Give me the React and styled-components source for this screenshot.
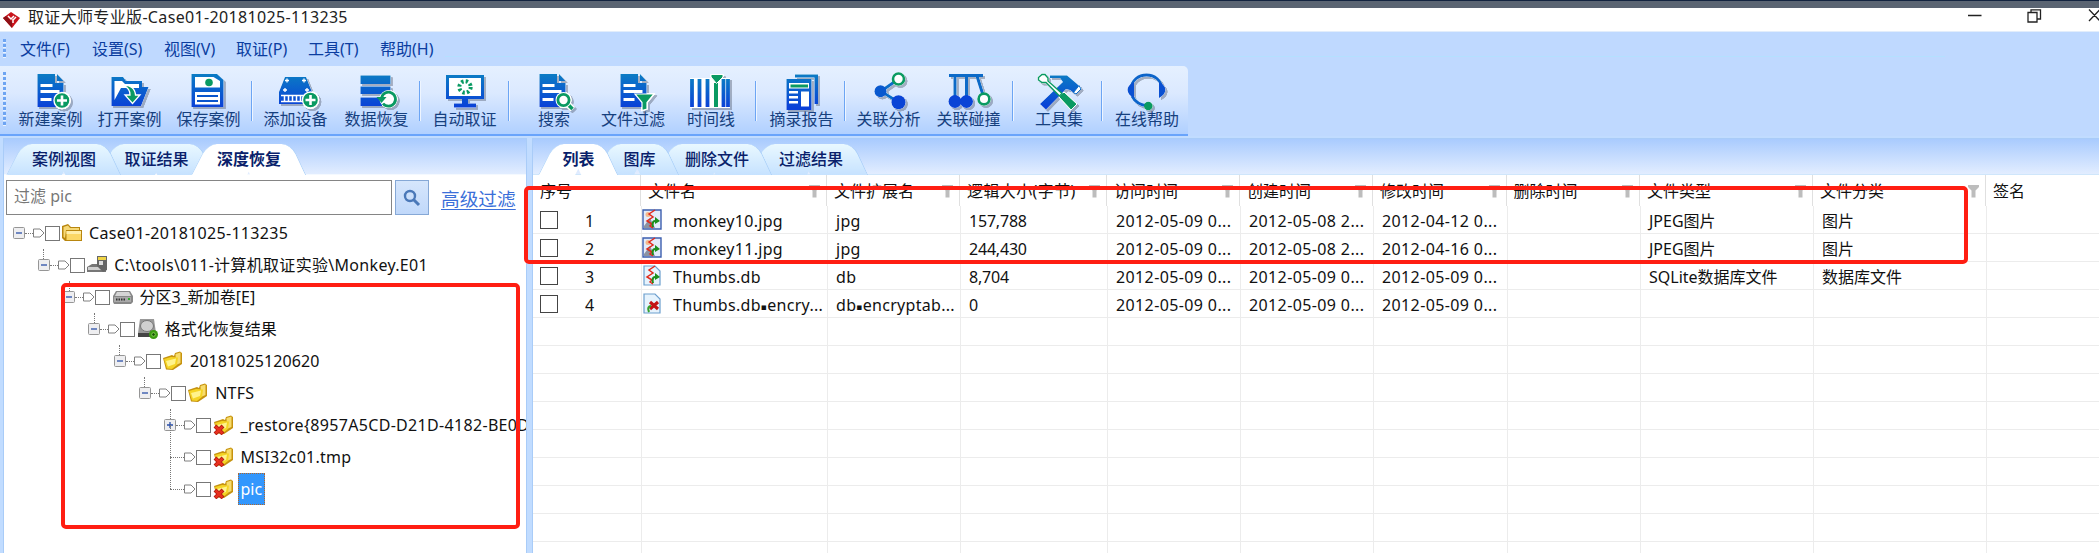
import React from 'react';
import styled, { createGlobalStyle, css } from 'styled-components';

const Global = createGlobalStyle`
  * { box-sizing: border-box; }
  html, body { margin: 0; padding: 0; overflow: hidden; }
  body {
    font-family: "Noto Sans", "Noto Sans CJK SC", sans-serif;
    font-size: 16px;
    line-height: 20px;
    color: #111;
    background: #bfd9ff;
    white-space: nowrap;
  }
`;

const Window = styled.div`
  position: relative;
  display: flex;
  flex-direction: column;
  width: 2099px;
  height: 553px;
  overflow: hidden;
`;

const DesktopStrip = styled.div`
  flex: none;
  height: 8px;
  background: #5a6472;
  border-top: 1px solid #12233f;
`;

const TitleBar = styled.header`
  flex: none;
  display: flex;
  align-items: center;
  height: 24px;
  padding-left: 2px;
  background: #fff;
  border-bottom: 1px solid #e2edfb;
`;

const Title = styled.span`
  flex: 1;
  margin: -5px 0 0 7px;
  color: #222;
  letter-spacing: 0.34px;
`;

const WindowControls = styled.div`
  display: flex;
  align-items: flex-start;
  width: 133px;
  height: 22px;
`;

const MenuBar = styled.nav`
  flex: none;
  display: flex;
  align-items: center;
  height: 34px;
  padding-left: 3px;
  background: linear-gradient(#b4e0ff, #b4e0ff) 445px 24px / 1500px 1px no-repeat, #bfd9ff;
`;

const DragHandle = styled.i`
  flex: none;
  width: 3px;
  height: ${(p) => p.$height}px;
  background: repeating-linear-gradient(#6da4f2 0 3px, #eaf3ff 3px 4px, transparent 4px 5px);
`;

const MenuItem = styled.span`
  width: 72px;
  margin-top: -1px;
  color: #0b3da0;
  &:first-of-type { margin-left: 14px; }
`;

const Toolbar = styled.div`
  flex: none;
  display: flex;
  width: 1188px;
  height: 70px;
  padding: 6px 0 0 3px;
  border-bottom: 2px solid #69a4fb;
  border-top-right-radius: 5px;
  background: linear-gradient(#e5f0ff, #dbe9ff 40%, #b0d0ff);
`;

const ToolSeparator = styled.i`
  flex: none;
  width: 2px;
  height: 40px;
  margin: 9px -0.5px 0 ${(p) => p.$gap - 0.5}px;
  border-left: 1px solid #6ca5f4;
  border-right: 1px solid #eef5ff;
`;

const ToolButton = styled.div`
  flex: none;
  display: flex;
  flex-direction: column;
  align-items: center;
  width: ${(p) => p.$width}px;
  margin-left: ${(p) => p.$gap}px;
  color: #16407e;
`;

const ToolLabel = styled.span`
  margin-top: -3px;
`;

const ToolSvg = styled.svg`
  flex: none;
  width: 44px;
  height: 40px;
  overflow: visible;
  filter: drop-shadow(0 0 0.7px #fff) drop-shadow(0 0 0.5px #fff) drop-shadow(2px 2px 0.5px rgba(90, 100, 120, 0.45));
`;

const Workspace = styled.main`
  flex: 1;
  display: flex;
  min-height: 0;
  padding-top: 3px;
  background: #c1dcff;
`;

const Pane = styled.section`
  flex: none;
  display: flex;
  flex-direction: column;
  width: ${(p) => p.$width}px;
  margin-left: ${(p) => p.$offset}px;
  overflow: hidden;
  background: #fff;
  box-shadow: 0 0 0 1px #a9ccf8;
`;

const TabStrip = styled.div`
  flex: none;
  display: flex;
  align-items: flex-end;
  height: 36px;
  padding-left: ${(p) => p.$start}px;
  background: linear-gradient(#a9cbfe, #e2edff);
  border-bottom: 1px solid ${(p) => (p.$line ? '#cfe6fb' : '#f4f9ff')};
`;

const tabFace = css`
  content: '';
  position: absolute;
  z-index: -1;
  top: 0;
  bottom: -1px;
  width: 55%;
  background: ${(p) => (p.$active ? '#fff' : 'linear-gradient(#e9f8ff, #c6e2ff)')};
`;

const Tab = styled.div`
  position: relative;
  isolation: isolate;
  z-index: ${(p) => p.$level};
  width: ${(p) => p.$width}px;
  height: 30px;
  margin-right: -8px;
  padding-left: ${(p) => p.$nudge || 0}px;
  line-height: 31px;
  text-align: center;
  color: #0a1f6b;
  font-weight: ${(p) => (p.$active ? 600 : 500)};
  &::before {
    ${tabFace}
    left: 0;
    border-left: 1px solid #b7d8fa;
    border-top-left-radius: 10px;
    transform: skewX(-27deg);
  }
  &::after {
    ${tabFace}
    right: 0;
    border-right: 1px solid #a9cff8;
    border-top-right-radius: 10px;
    transform: skewX(25deg);
  }
`;

const FilterBar = styled.div`
  display: flex;
  align-items: flex-start;
  height: 37px;
  margin-top: 5px;
  padding-left: 2px;
`;

const FilterInput = styled.div`
  width: 386px;
  height: 35px;
  padding-left: 7px;
  border: 1px solid #858585;
  line-height: 31px;
  color: #777;
`;

const FilterButton = styled.div`
  display: flex;
  align-items: center;
  justify-content: center;
  width: 34px;
  height: 35px;
  margin-left: 3px;
  border: 1px solid #86a8d6;
  background: linear-gradient(#d6e6fc, #c0d8fa);
`;

const AdvancedLink = styled.a`
  margin-left: 12px;
  font-size: 18.7px;
  line-height: 38px;
  color: #3b6fd9;
  text-decoration: underline;
  text-underline-offset: 3px;
  text-decoration-thickness: 1px;
`;

const TreeRow = styled.div`
  position: relative;
  display: flex;
  align-items: center;
  height: 32px;
  padding-left: ${(p) => 8.5 + p.$level * 25.25}px;
  & > * { flex: none; }
`;

const Riser = styled.i`
  position: absolute;
  left: ${(p) => 14 + p.$level * 25.25}px;
  top: ${(p) => (p.$joined ? -16 : 0)}px;
  height: ${(p) => (p.$joined ? 32 : 10)}px;
  border-left: 1px dotted #777;
`;

const Expander = styled.svg`
  position: relative;
  width: 12px;
  height: 12px;
`;

const Branch = styled.i`
  width: ${(p) => (p.$leaf ? 14 : 8)}px;
  margin-left: ${(p) => (p.$leaf ? 6 : 0)}px;
  border-top: 1px dotted #777;
`;

const TreeCheck = styled.i`
  width: 15px;
  height: 15px;
  margin-right: -0.5px;
  border: 1px solid #777;
  background: #fff;
`;

const NodeIcon = styled.svg`
  width: 22px;
  height: 20px;
  margin-left: 2px;
`;

const NodeLabel = styled.span`
  margin-left: 3px;
  padding: 0 2px;
  height: 32px;
  line-height: 30px;
  border: 1px solid transparent;
  letter-spacing: ${(p) => p.$tracking || 0}px;
  ${(p) => p.$selected && css`
    color: #fff;
    background: #3397fd;
    border: 1px dotted #b0672c;
  `}
`;

const columns = '108px 186px 133px 147px 133px 133px 133.5px 133.5px 173px 173px 1fr';

const HeaderRow = styled.div`
  flex: none;
  display: grid;
  grid-template-columns: ${columns};
  height: 31px;
`;

const HeaderCell = styled.div`
  display: flex;
  align-items: center;
  justify-content: space-between;
  padding: 1px 6px 0 7px;
  border-right: 1px solid #e0e0e0;
  letter-spacing: ${(p) => p.$tracking || 0}px;
  &:last-child { border-right: 0; }
`;

const DataRow = styled.div`
  flex: none;
  display: grid;
  grid-template-columns: ${columns};
  height: 28px;
  padding-left: 1px;
  border-bottom: 1px solid #ececec;
`;

const Cell = styled.div`
  display: flex;
  align-items: center;
  overflow: hidden;
  padding: 2px 0 0 8px;
  border-right: 1px solid #ececec;
  letter-spacing: ${(p) => p.$tracking || 0}px;
  &:last-child { border-right: 0; }
`;

const IndexCell = styled(Cell)`
  padding-left: 6px;
`;

const FileCell = styled(Cell)`
  padding-left: 0;
`;

const RowCheck = styled.i`
  width: 18px;
  height: 18px;
  margin-top: -2px;
  border: 1px solid #444;
`;

const RowNumber = styled.span`
  width: 63px;
  text-align: center;
`;

const FileSvg = styled.svg`
  flex: none;
  width: 20px;
  height: 21px;
  margin: -2px 11px 0 0;
`;

const SquareDot = styled.span`
  font-family: "DejaVu Sans", sans-serif;
  font-size: 9px;
  line-height: 16px;
  vertical-align: 1.5px;
`;

const Highlight = styled.div`
  position: absolute;
  z-index: 20;
  left: ${(p) => p.$x}px;
  top: ${(p) => p.$y}px;
  width: ${(p) => p.$w}px;
  height: ${(p) => p.$h}px;
  border: 4px solid #ff1e12;
  border-radius: 5px;
`;

const G = '#0a9a62';
const B = 'url(#toolBlue)';

const DocShape = ({ x }) => (
  <g transform={`translate(${x} 0)`}>
    <path d="M0 2H17.5V11H26V35H0Z" fill={B} />
    <path d="M19.5 2L26 9H19.5Z" fill={B} />
    <path d="M3 13.5H15M3 19.5H22M3 27.5H14" stroke="#fff" strokeWidth="2.8" />
  </g>
);

const PlusBadge = ({ x, y }) => (
  <g>
    <circle cx={x} cy={y} r="8" fill={G} stroke="#fff" strokeWidth="1.4" />
    <path d={`M${x - 5} ${y}H${x + 5}M${x} ${y - 5}V${y + 5}`} stroke="#fff" strokeWidth="2.6" />
  </g>
);

const toolArt = {
  create: <><DocShape x={8.5} /><PlusBadge x={33} y={28.5} /></>,
  open: (
    <>
      <path d="M3.5 5H15L18 9H34V15H40.5L33 34H3.5Z" fill={B} />
      <path d="M6.5 9H14L17 12H31V16H13L6.5 28Z" fill="#fff" />
      <path d="M16 13.5C22 13 27 16 27.5 23H32L24.5 31.5L17 23H22C22 18 20 16 16 13.5Z" fill={G} stroke="#fff" strokeWidth="1.3" />
    </>
  ),
  save: (
    <>
      <path d="M4.5 2H30L36.5 8V35H4.5Z" fill={B} />
      <path d="M8 5H26.5L33 9V15.5H8ZM8 20H33V32.5H8Z" fill="#fff" />
      <circle cx="22" cy="10.5" r="3.8" fill={G} />
      <path d="M10 24H31M10 29H31" stroke="#0a55cc" strokeWidth="2.2" />
    </>
  ),
  device: (
    <>
      <path d="M11 5H32L38 20V32H5V20Z" fill={B} />
      <path d="M7 23.5H34M7 29.5H34M10.5 23V30M14.5 23V30M18.5 23V30M22.5 23V30M26.5 23V30" stroke="#fff" strokeWidth="1.5" />
      <path d="M11 8.5H15M13 6.5V10.5M28 8.5H32M30 6.5V10.5M9 18H13M11 16V20M31 18H35M33 16V20" stroke="#fff" strokeWidth="1.3" />
      <PlusBadge x={36.5} y={28} />
    </>
  ),
  restore: (
    <>
      <path d="M5.5 3.5H35.5V12H5.5ZM5.5 14.5H35.5V22H5.5ZM5.5 25.5H27V34H5.5Z" fill={B} />
      <circle cx="33.5" cy="27" r="9" fill="#fff" />
      <path d="M28 31.5A7 7 0 1 0 26.7 25.5" fill="none" stroke={G} strokeWidth="2.8" />
      <path d="M21.5 25H31.5L26.5 31Z" fill={G} />
    </>
  ),
  auto: (
    <>
      <path d="M3 3H41V27H3Z" fill={B} />
      <path d="M6 6H38V24H6Z" fill="#fff" />
      <circle cx="22" cy="15" r="5.7" fill="none" stroke={G} strokeWidth="4" strokeDasharray="2.3 2.18" />
      <path d="M19 27H25V31.5H33V35.5H11V31.5H19Z" fill={B} />
    </>
  ),
  search: (
    <>
      <DocShape x={7.5} />
      <path d="M35.5 32L40.5 37" stroke="#fff" strokeWidth="6" />
      <path d="M35.5 32L40.5 37" stroke={G} strokeWidth="3.5" />
      <circle cx="31.5" cy="28" r="8" fill="#fff" />
      <circle cx="31.5" cy="28" r="5.6" fill="#fff" stroke={G} strokeWidth="2.8" />
    </>
  ),
  filter: (
    <>
      <DocShape x={9.5} />
      <path d="M24 22H43L36 30.5V37L31 38.5V30.5Z" fill={G} stroke="#fff" strokeWidth="1.2" />
    </>
  ),
  timeline: (
    <>
      <path d="M1 6H41V36H1Z" fill="#fff" />
      <path d="M3 7V35M10.5 7V35M18.5 7V35M34.5 7V35M39 7V35" stroke="url(#barBlue)" strokeWidth="3.8" />
      <path d="M27 11V35" stroke={G} strokeWidth="4" />
      <path d="M22 2.5H34V5L27.5 11.5L22 5Z" fill={G} stroke="#fff" />
    </>
  ),
  report: (
    <>
      <path d="M15 2.5H38V32H34.5V5.5H15Z" fill={B} />
      <path d="M6.5 7H31.5V38H6.5Z" fill={B} />
      <path d="M9 11H29V16.5H9ZM9 19H18V21.5H9ZM9 24H18V26.5H9ZM9 29H18V31.5H9ZM21 19.5H29V34.5H21Z" fill="#fff" />
      <path d="M10.5 12.5H28V15.5H10.5Z" fill={G} />
    </>
  ),
  relation: (
    <>
      <path d="M31.5 7L14 19.3L31.5 30.3" fill="none" stroke="#0b6cc8" strokeWidth="2.8" />
      <circle cx="13.5" cy="19.3" r="6" fill="#0858cf" />
      <circle cx="31.5" cy="30.3" r="7" fill="#0a44d6" />
      <circle cx="31.5" cy="7" r="5.5" fill="#fff" stroke={G} strokeWidth="2.6" />
    </>
  ),
  collide: (
    <>
      <path d="M2 3.5H36M8 4V28M19.5 4V28M30 4L36 23" fill="none" stroke="#0c6ac8" strokeWidth="3" />
      <circle cx="8" cy="29.5" r="6.5" fill="#0a44d6" />
      <circle cx="19.5" cy="29.5" r="6.5" fill="#0a44d6" />
      <circle cx="37" cy="27" r="5.4" fill="#fff" stroke={G} strokeWidth="2.7" />
    </>
  ),
  tools: (
    <>
      <path d="M3 32L26 10L23 6L13 6V3.5H30L40 12L43 15L38 22L33 18L29 17L9 37.5Z" fill={B} />
      <path d="M36.5 20.5L42 13.5L44 17L39 22Z" fill="#fff" stroke="#0b6cc8" strokeWidth="1" />
      <path d="M22 25L27 20L40 32L34 38Z" fill={G} stroke="#fff" strokeWidth="1" />
      <path d="M1.5 5.5L5 2.5H8L11 6V9L25 21.5L22.5 24L9 10.5H5L1.5 8Z" fill="#fff" stroke={G} strokeWidth="1.4" />
    </>
  ),
  help: (
    <>
      <path d="M6 18C6 -2 37 -2 37 18M7 24C10 30 15 33.5 23 33.5" fill="none" stroke="#0c64ca" strokeWidth="2.8" />
      <path d="M9 10C0 14 1 22 9 26ZM34 10C43 14 42 22 34 26Z" fill="#0a50d2" />
      <circle cx="23.3" cy="34" r="4.3" fill={G} />
    </>
  ),
};

const tools = [
  ['create', '新建案例', 12.5], ['open', '打开案例', 15], ['save', '保存案例', 15], 11,
  ['device', '添加设备', 11], ['restore', '数据恢复', 17], 11,
  ['auto', '自动取证', 12], 12,
  ['search', '搜索', 28.5], ['filter', '文件过滤', 31], ['timeline', '时间线', 22], 20,
  ['report', '摘录报告', 13.5], 11,
  ['relation', '关联分析', 11], ['collide', '关联碰撞', 16], 11.5,
  ['tools', '工具集', 22], 18,
  ['help', '在线帮助', 13],
];

const menus = ['文件(F)', '设置(S)', '视图(V)', '取证(P)', '工具(T)', '帮助(H)'];

const Folder = () => (
  <>
    <path d="M1 7L10 4L12 5L13 2L18 0.5L20 2V13L11 19L4 18.5Z" fill="#c6930f" />
    <path d="M13.5 3L18.5 1.5V12L14 14Z" fill="#f7dc6c" />
    <path d="M2 8L9 6L16 6.5L15 14L10 18L5 17.5Z" fill="#f5d425" />
    <path d="M4 10L14 7.5L13 13L6 15.5Z" fill="#fff38c" />
  </>
);

const nodeArt = {
  root: (
    <>
      <path d="M1 3L7 1L10 4H19V7H21V18H4L1 15Z" fill="#b8860f" />
      <path d="M2.5 4L7 2.5L9 5H18V7H5L4 15L2.5 14Z" fill="#f6d876" />
      <path d="M5.5 8H20V17H5.5Z" fill="#fbd766" />
      <path d="M5.5 8H20V11H5.5Z" fill="#ffeeaa" />
    </>
  ),
  image: (
    <>
      <path d="M1 12L6 9H16L20 12V17H1Z" fill="#777" />
      <path d="M2 12H15V15H2Z" fill="#cfcfcf" />
      <path d="M11 1H21V15L17 17L11 11Z" fill="#666" />
      <path d="M12 2H20V5H12Z" fill="#efd446" />
      <path d="M13 6H17V10H13Z" fill="#ddd" />
    </>
  ),
  drive: (
    <>
      <path d="M4 4H18L21 9V15L19 17H2L1 15V9Z" fill="#888" />
      <path d="M5 5H17L19 9H3Z" fill="#d5d5d5" />
      <path d="M2 10H19V15H2Z" fill="#a9a9a9" />
      <path d="M4 12.5H13" stroke="#333" strokeWidth="2" strokeDasharray="1.5 1" />
      <path d="M16 12H18" stroke="#3a3" strokeWidth="2" />
    </>
  ),
  recovered: (
    <>
      <path d="M3 0H17L19 14V18H1V14Z" fill="#999" />
      <ellipse cx="10" cy="7" rx="6.5" ry="5.5" fill="#d0d0d0" stroke="#777" />
      <path d="M1 14H19V18H1Z" fill="#444" />
      <circle cx="16.5" cy="15.5" r="4.5" fill="#3c9a12" />
      <circle cx="16.5" cy="15.5" r="1.8" fill="#164d05" stroke="#8fe05c" strokeWidth="0.8" />
    </>
  ),
  folder: <Folder />,
  deleted: (
    <>
      <Folder />
      <path d="M2 11L10 19M10 11L2 19" stroke="#a91a10" strokeWidth="4" />
      <path d="M2.5 11.5L9.5 18.5M9.5 11.5L2.5 18.5" stroke="#e8301e" strokeWidth="2.6" />
    </>
  ),
};

const nodes = [
  { level: 0, icon: 'root', label: 'Case01-20181025-113235', tracking: 0.3, open: true },
  { level: 1, icon: 'image', label: 'C:\\tools\\011-计算机取证实验\\Monkey.E01', tracking: 0.31, open: true },
  { level: 2, icon: 'drive', label: '分区3_新加卷[E]', open: true },
  { level: 3, icon: 'recovered', label: '格式化恢复结果', open: true },
  { level: 4, icon: 'folder', label: '20181025120620', tracking: 0.1, open: true },
  { level: 5, icon: 'folder', label: 'NTFS', tracking: 0.2, open: true },
  { level: 6, icon: 'deleted', label: '_restore{8957A5CD-D21D-4182-BE0D', tracking: 0.32, open: false },
  { level: 6, icon: 'deleted', label: 'MSI32c01.tmp', tracking: 0.25, leaf: true },
  { level: 6, icon: 'deleted', label: 'pic', leaf: true, selected: true },
];

const headers = ['序号', '文件名', '文件扩展名', '逻辑大小(字节)', '访问时间', '创建时间', '修改时间', '删除时间', '文件类型', '文件分类', '签名'];

const files = [
  { kind: 'picture', name: 'monkey10.jpg', cells: ['jpg', '157,788', '2012-05-09 0...', '2012-05-08 2...', '2012-04-12 0...', '', 'JPEG图片', '图片', ''] },
  { kind: 'picture', name: 'monkey11.jpg', cells: ['jpg', '244,430', '2012-05-09 0...', '2012-05-08 2...', '2012-04-16 0...', '', 'JPEG图片', '图片', ''] },
  { kind: 'data', name: 'Thumbs.db', cells: ['db', '8,704', '2012-05-09 0...', '2012-05-09 0...', '2012-05-09 0...', '', 'SQLite数据库文件', '数据库文件', ''] },
  { kind: 'lost', name: 'Thumbs.db▪encry...', cells: ['db▪encryptab...', '0', '2012-05-09 0...', '2012-05-09 0...', '2012-05-09 0...', '', '', '', ''] },
];

const cellTracking = [0.3, -0.2, 0.38, 0.38, 0.38, 0, 0, 0, 0];

const Dotted = ({ children }) => {
  const [head, tail] = children.split('▪');
  return <span>{head}{tail && <SquareDot>▪</SquareDot>}{tail}</span>;
};

const FileIcon = ({ kind }) => (
  <FileSvg viewBox="0 0 20 21">
    {kind === 'picture' ? (
      <>
        <path d="M1 1H19V20H1Z" fill="#e3ebfa" stroke="#3d5fae" strokeWidth="1.4" />
        <path d="M2 17L8 9L13 19H2Z" fill="#8b93a3" />
        <circle cx="6" cy="5.5" r="2.5" fill="#f5b98c" />
      </>
    ) : (
      <path d="M2 1H13L18 6V20H2Z" fill="#e6f3fd" stroke="#6c9fce" strokeWidth="1.2" />
    )}
    {kind !== 'lost' && (
      <>
        <path d="M13 1L7 5L11 8L5 12L10 15L8 17L11 19" fill="none" stroke="#e02a1c" strokeWidth="1.5" />
        <path d="M10 18C9 14 10 11 13 11V8L18 12L13 15V13C12 13 11 15 12 18Z" fill="#1c8f1c" />
      </>
    )}
    {kind === 'lost' && (
      <>
        <path d="M8 9L16 16M16 9L8 16" stroke="#c31414" strokeWidth="3.2" />
        <path d="M7 19C5 15 7 13 9 13" stroke="#33a02c" strokeWidth="2.2" fill="none" />
      </>
    )}
  </FileSvg>
);

const FunnelIcon = () => (
  <svg width="11" height="13" viewBox="0 0 11 13">
    <path d="M0 0H11V2L7.5 5.5V12.5H3.5V5.5L0 2Z" fill="#bdbdbd" />
  </svg>
);

export default function App() {
  return (
    <>
      <Global />
      <svg width="0" height="0" style={{ position: 'absolute' }}>
        <defs>
          <linearGradient id="toolBlue" gradientUnits="userSpaceOnUse" x1="0" y1="2" x2="0" y2="36">
            <stop offset="0" stopColor="#0b7cc4" />
            <stop offset="1" stopColor="#0a3fd8" />
          </linearGradient>
          <linearGradient id="barBlue" gradientUnits="userSpaceOnUse" x1="0" y1="6" x2="0" y2="36">
            <stop offset="0" stopColor="#0b7cc4" />
            <stop offset="1" stopColor="#0a3fd8" />
          </linearGradient>
        </defs>
      </svg>
      <Window>
        <DesktopStrip />
        <TitleBar>
          <svg width="19" height="18" viewBox="0 0 19 18">
            <path d="M1 7L9 1L18 7L10 17Z" fill="#c9141c" />
            <path d="M1 7L4 5L10 11V17Z" fill="#8d1016" />
            <path d="M6 5L9 8L12 5M11 8V12M14 6L11 9" fill="none" stroke="#fff" strokeWidth="1.5" />
          </svg>
          <Title>取证大师专业版-Case01-20181025-113235</Title>
          <WindowControls>
            <svg width="133" height="15" viewBox="0 0 133 15" fill="none" stroke="#222" strokeWidth="1.3">
              <path d="M2 6.5H15.5M62 3.5H71V13H62ZM65 3V0.8H74.5V10H71.5M123 0.5L134 12M134 0.5L123 12" />
            </svg>
          </WindowControls>
        </TitleBar>
        <MenuBar>
          <DragHandle $height={20} />
          {menus.map((m) => <MenuItem key={m}>{m}</MenuItem>)}
        </MenuBar>
        <Toolbar>
          <DragHandle $height={55} />
          {tools.map((t, i) => (typeof t === 'number' ? (
            <ToolSeparator key={i} $gap={t} />
          ) : (
            <ToolButton key={i} $width={t[1].length * 16} $gap={t[2]}>
              <ToolSvg viewBox="0 0 44 40">{toolArt[t[0]]}</ToolSvg>
              <ToolLabel>{t[1]}</ToolLabel>
            </ToolButton>
          )))}
        </Toolbar>
        <Workspace>
          <Pane $width={522} $offset={4}>
            <TabStrip $start={10}>
              <Tab $width={100} $level={2} $nudge={-3}>案例视图</Tab>
              <Tab $width={101} $level={1}>取证结果</Tab>
              <Tab $width={100} $level={3} $active>深度恢复</Tab>
            </TabStrip>
            <FilterBar>
              <FilterInput>过滤 pic</FilterInput>
              <FilterButton>
                <svg width="18" height="18" viewBox="0 0 18 18" fill="none" stroke="#4a78b8">
                  <circle cx="7" cy="7" r="5" strokeWidth="2.4" />
                  <path d="M10.5 10.5L16 16" strokeWidth="3" />
                </svg>
              </FilterButton>
              <AdvancedLink>高级过滤</AdvancedLink>
            </FilterBar>
            <div>
              {nodes.map((n, i) => (
                <TreeRow key={i} $level={n.level}>
                  {n.level > 0 && <Riser $level={n.level} $joined={n.leaf} />}
                  {!n.leaf && (
                    <Expander viewBox="0 0 12 12">
                      <rect x="0.5" y="0.5" width="11" height="11" rx="1" fill="#eeeef0" stroke="#969696" />
                      <path d={n.open ? 'M3 6H9' : 'M3 6H9M6 3V9'} stroke="#2a4fa8" strokeWidth="1.3" />
                    </Expander>
                  )}
                  <Branch $leaf={n.leaf} />
                  <svg width="12" height="10" viewBox="0 0 12 10">
                    <path d="M0.5 1H7L11 5L7 9H0.5Z" fill="#fff" stroke="#808080" />
                  </svg>
                  <TreeCheck />
                  <NodeIcon viewBox="0 0 22 20">{nodeArt[n.icon]}</NodeIcon>
                  <NodeLabel $selected={n.selected} $tracking={n.tracking}>{n.label}</NodeLabel>
                </TreeRow>
              ))}
            </div>
          </Pane>
          <Pane $width={1566} $offset={7}>
            <TabStrip $start={13} $line>
              <Tab $width={65} $level={5} $active>列表</Tab>
              <Tab $width={69} $level={4} $nudge={4}>图库</Tab>
              <Tab $width={101} $level={3} $nudge={5}>删除文件</Tab>
              <Tab $width={104} $level={2} $nudge={4}>过滤结果</Tab>
            </TabStrip>
            <HeaderRow>
              {headers.map((h, i) => (
                <HeaderCell key={h} $tracking={i === 3 ? 0.4 : 0}>
                  {h}
                  {i > 0 && i < headers.length - 1 && <FunnelIcon />}
                </HeaderCell>
              ))}
            </HeaderRow>
            {files.map((f, i) => (
              <DataRow key={f.name}>
                <IndexCell><RowCheck /><RowNumber>{i + 1}</RowNumber></IndexCell>
                <FileCell $tracking={0.3}><FileIcon kind={f.kind} /><Dotted>{f.name}</Dotted></FileCell>
                {f.cells.map((c, j) => <Cell key={j} $tracking={cellTracking[j]}><Dotted>{c}</Dotted></Cell>)}
              </DataRow>
            ))}
            {Array.from({ length: 9 }, (_, i) => (
              <DataRow key={i}>{headers.map((h) => <Cell key={h} />)}</DataRow>
            ))}
          </Pane>
        </Workspace>
        <Highlight $x={61} $y={283} $w={459} $h={246} />
        <Highlight $x={524} $y={186} $w={1444} $h={78} />
      </Window>
    </>
  );
}
